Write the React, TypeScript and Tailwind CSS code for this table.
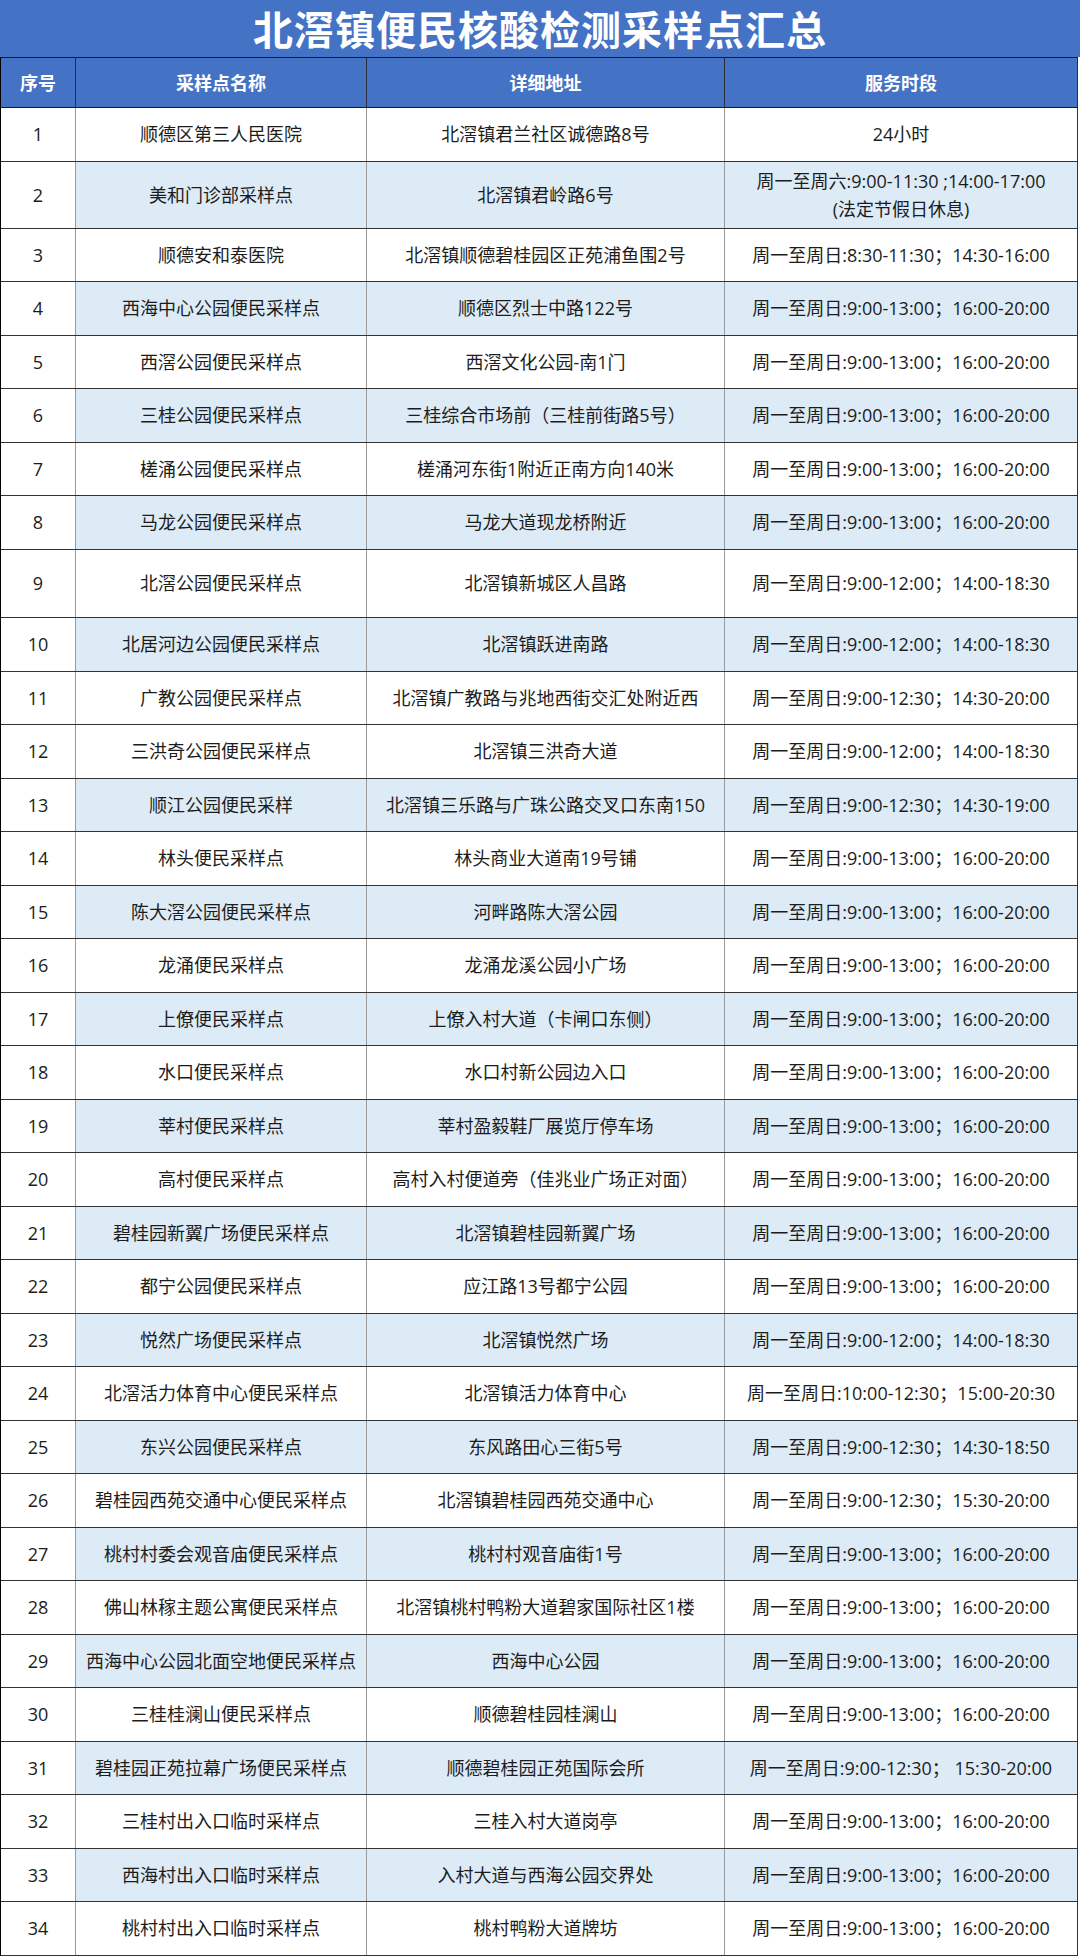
import React from 'react';

type Site = {
  name: string;
  address: string;
  hours: string;
  note?: string;
};

const WEEK_A = '周一至周日:9:00-13:00；16:00-20:00';
const WEEK_B = '周一至周日:9:00-12:00；14:00-18:30';

const sites: Site[] = [
  { name: '顺德区第三人民医院', address: '北滘镇君兰社区诚德路8号', hours: '24小时' },
  {
    name: '美和门诊部采样点',
    address: '北滘镇君岭路6号',
    hours: '周一至周六:9:00-11:30 ;14:00-17:00',
    note: '(法定节假日休息)',
  },
  { name: '顺德安和泰医院', address: '北滘镇顺德碧桂园区正苑浦鱼围2号', hours: '周一至周日:8:30-11:30；14:30-16:00' },
  { name: '西海中心公园便民采样点', address: '顺德区烈士中路122号', hours: WEEK_A },
  { name: '西滘公园便民采样点', address: '西滘文化公园-南1门', hours: WEEK_A },
  { name: '三桂公园便民采样点', address: '三桂综合市场前（三桂前街路5号）', hours: WEEK_A },
  { name: '槎涌公园便民采样点', address: '槎涌河东街1附近正南方向140米', hours: WEEK_A },
  { name: '马龙公园便民采样点', address: '马龙大道现龙桥附近', hours: WEEK_A },
  { name: '北滘公园便民采样点', address: '北滘镇新城区人昌路', hours: WEEK_B },
  { name: '北居河边公园便民采样点', address: '北滘镇跃进南路', hours: WEEK_B },
  { name: '广教公园便民采样点', address: '北滘镇广教路与兆地西街交汇处附近西', hours: '周一至周日:9:00-12:30；14:30-20:00' },
  { name: '三洪奇公园便民采样点', address: '北滘镇三洪奇大道', hours: WEEK_B },
  { name: '顺江公园便民采样', address: '北滘镇三乐路与广珠公路交叉口东南150', hours: '周一至周日:9:00-12:30；14:30-19:00' },
  { name: '林头便民采样点', address: '林头商业大道南19号铺', hours: WEEK_A },
  { name: '陈大滘公园便民采样点', address: '河畔路陈大滘公园', hours: WEEK_A },
  { name: '龙涌便民采样点', address: '龙涌龙溪公园小广场', hours: WEEK_A },
  { name: '上僚便民采样点', address: '上僚入村大道（卡闸口东侧）', hours: WEEK_A },
  { name: '水口便民采样点', address: '水口村新公园边入口', hours: WEEK_A },
  { name: '莘村便民采样点', address: '莘村盈毅鞋厂展览厅停车场', hours: WEEK_A },
  { name: '高村便民采样点', address: '高村入村便道旁（佳兆业广场正对面）', hours: WEEK_A },
  { name: '碧桂园新翼广场便民采样点', address: '北滘镇碧桂园新翼广场', hours: WEEK_A },
  { name: '都宁公园便民采样点', address: '应江路13号都宁公园', hours: WEEK_A },
  { name: '悦然广场便民采样点', address: '北滘镇悦然广场', hours: WEEK_B },
  { name: '北滘活力体育中心便民采样点', address: '北滘镇活力体育中心', hours: '周一至周日:10:00-12:30；15:00-20:30' },
  { name: '东兴公园便民采样点', address: '东风路田心三街5号', hours: '周一至周日:9:00-12:30；14:30-18:50' },
  { name: '碧桂园西苑交通中心便民采样点', address: '北滘镇碧桂园西苑交通中心', hours: '周一至周日:9:00-12:30；15:30-20:00' },
  { name: '桃村村委会观音庙便民采样点', address: '桃村村观音庙街1号', hours: WEEK_A },
  { name: '佛山林稼主题公寓便民采样点', address: '北滘镇桃村鸭粉大道碧家国际社区1楼', hours: WEEK_A },
  { name: '西海中心公园北面空地便民采样点', address: '西海中心公园', hours: WEEK_A },
  { name: '三桂桂澜山便民采样点', address: '顺德碧桂园桂澜山', hours: WEEK_A },
  { name: '碧桂园正苑拉幕广场便民采样点', address: '顺德碧桂园正苑国际会所', hours: '周一至周日:9:00-12:30； 15:30-20:00' },
  { name: '三桂村出入口临时采样点', address: '三桂入村大道岗亭', hours: WEEK_A },
  { name: '西海村出入口临时采样点', address: '入村大道与西海公园交界处', hours: WEEK_A },
  { name: '桃村村出入口临时采样点', address: '桃村鸭粉大道牌坊', hours: WEEK_A },
];

// rows 2-10 even are shaded, then from 13 on the odd ones
const isShaded = (n: number) => (n <= 10 ? n % 2 === 0 : n >= 13 && n % 2 === 1);

const rowHeight = (n: number) => {
  if (n === 2) return 'h-[67px]';
  if (n === 9) return 'h-[68.5px]';
  return 'h-[53.5px]';
};

const FONT = '"Open Sans", "Noto Sans CJK SC", "Noto Sans", sans-serif';
const TITLE_FONT = '"Noto Sans CJK SC", "Noto Sans", sans-serif';

export default function App() {
  return (
    <div className="w-[1080px] bg-white text-[#1c1c1c]" style={{ fontFamily: FONT }}>
      {/* title */}
      <div className="h-[57px] bg-[#4472c4] flex items-center justify-center">
        <h1
          className="text-[40px] font-bold text-white leading-none tracking-[1px] -mt-[2px]"
          style={{ fontFamily: TITLE_FONT }}
        >
          北滘镇便民核酸检测采样点汇总
        </h1>
      </div>

      <div className="w-[1078px] border-l border-black">
        {/* header */}
        <div
          className="grid grid-cols-[75px_291px_358px_1fr] h-[51px] bg-[#4472c4] border-t border-b border-[#1b1b1b] text-white text-[18px] font-bold"
          style={{ fontFamily: TITLE_FONT }}
        >
          <div className="flex items-center justify-center border-r border-[#2a2f3a]">序号</div>
          <div className="flex items-center justify-center border-r border-[#2a2f3a]">采样点名称</div>
          <div className="flex items-center justify-center border-r border-[#2a2f3a]">详细地址</div>
          <div className="flex items-center justify-center border-r border-[#2a2f3a]">服务时段</div>
        </div>

        {/* body */}
        {sites.map((site, i) => {
          const n = i + 1;
          const shade = isShaded(n) ? 'bg-[#ddebf7]' : 'bg-white';
          return (
            <div
              key={n}
              className={`grid grid-cols-[75px_291px_358px_1fr] border-b border-[#333333] text-[18px] leading-[28px] ${rowHeight(n)}`}
            >
              <div className="flex items-center justify-center bg-white border-r border-[#9a9a9a]">{n}</div>
              <div className={`flex items-center justify-center border-r border-[#9a9a9a] whitespace-nowrap ${shade}`}>
                {site.name}
              </div>
              <div className={`flex items-center justify-center border-r border-[#9a9a9a] whitespace-nowrap ${shade}`}>
                {site.address}
              </div>
              <div className={`flex flex-col items-center justify-center border-r border-[#333333] whitespace-pre ${shade}`}>
                <span>{site.hours}</span>
                {site.note && <span>{site.note}</span>}
              </div>
            </div>
          );
        })}
      </div>
    </div>
  );
}
